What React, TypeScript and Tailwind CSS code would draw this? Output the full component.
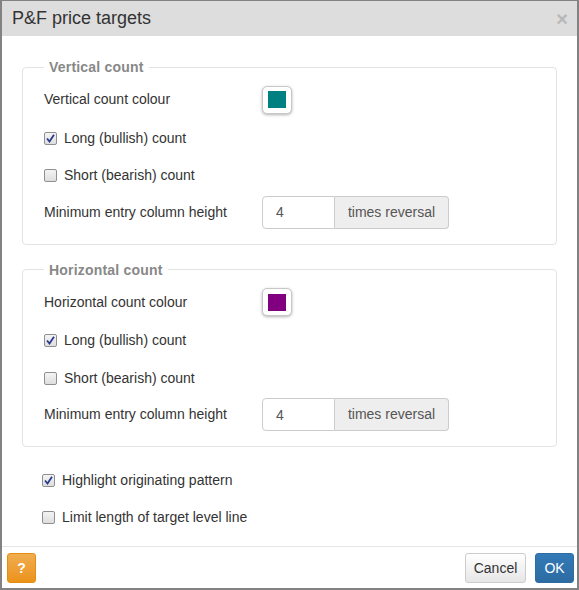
import React, { useState } from 'react';

const font = { fontFamily: '"Liberation Sans", Arial, sans-serif' };

interface CheckProps {
  label: string;
  checked: boolean;
  onToggle: () => void;
  h?: string;
}

const CheckRow: React.FC<CheckProps> = ({ label, checked, onToggle, h = 'h-[37px]' }) => (
  <label className={`flex items-center ${h} cursor-pointer select-none`} onClick={onToggle}>
    <span className="w-[13px] h-[13px] border border-[#8f8f8f] rounded-[2px] bg-gradient-to-b from-[#f4f4f4] to-[#dedede] flex items-center justify-center">
      {checked && (
        <svg width="9" height="9" viewBox="0 0 9 9">
          <path d="M1 4.5 L3.5 7.5 L8 0.8" fill="none" stroke="#2a3a8c" strokeWidth="1.8" />
        </svg>
      )}
    </span>
    <span className="ml-[7px] text-[14px] text-[#333]">{label}</span>
  </label>
);

const ColourRow: React.FC<{ label: string; colour: string }> = ({ label, colour }) => (
  <div className="flex items-center h-[39px]">
    <span className="w-[218px] text-[14px] text-[#333]">{label}</span>
    <button className="w-[30px] h-[28px] rounded-[5px] border border-[#c8c8c8] bg-white shadow-[0_1px_3px_rgba(0,0,0,0.3)] flex items-center justify-center">
      <span className="w-[18px] h-[17px]" style={{ backgroundColor: colour }} />
    </button>
  </div>
);

const HeightRow: React.FC<{ value: string }> = ({ value }) => (
  <div className="flex items-center mt-[1.5px] h-[33px]">
    <span className="w-[218px] text-[14px] text-[#333]">Minimum entry column height</span>
    <div className="flex h-[33px]">
      <input
        defaultValue={value}
        className="w-[73px] h-full border border-[#ccc] rounded-l-[4px] px-[13px] text-[14px] text-[#555] outline-none"
        style={font}
      />
      <span className="w-[114px] h-full border border-l-0 border-[#ccc] rounded-r-[4px] bg-[#eee] text-[#555] text-[14px] flex items-center justify-center">
        times reversal
      </span>
    </div>
  </div>
);

const CountSet: React.FC<{ title: string; label: string; colour: string }> = ({ title, label, colour }) => {
  const [longOn, setLongOn] = useState(true);
  const [shortOn, setShortOn] = useState(false);
  return (
    <fieldset className="border border-[#e3e3e3] rounded-[4px] pl-[21px] pr-[21px] pb-[15px] pt-[3px]">
      <legend className="px-[5px] leading-[20px] text-[14px] font-bold text-[#888] tracking-[0.2px]">{title}</legend>
      <ColourRow label={label} colour={colour} />
      <CheckRow label="Long (bullish) count" checked={longOn} onToggle={() => setLongOn(!longOn)} h="h-[38px]" />
      <CheckRow label="Short (bearish) count" checked={shortOn} onToggle={() => setShortOn(!shortOn)} />
      <HeightRow value="4" />
    </fieldset>
  );
};

export default function App() {
  const [highlight, setHighlight] = useState(true);
  const [limit, setLimit] = useState(false);

  return (
    <div style={font} className="w-[579px] h-[590px] bg-white border-2 border-t border-[#828282] flex flex-col overflow-hidden">
      <div className="h-[35px] bg-[#dddddd] flex items-center justify-between pl-[10px] pr-[9px] shrink-0">
        <span className="text-[18px] text-[#333]">P&amp;F price targets</span>
        <span className="text-[20px] font-bold text-[#b8b8b8] leading-none">×</span>
      </div>

      <div className="flex-1 pt-[21px] px-[20px]">
        <CountSet title="Vertical count" label="Vertical count colour" colour="#008080" />
        <div className="h-[15px]" />
        <CountSet title="Horizontal count" label="Horizontal count colour" colour="#800080" />
        <div className="pl-[20px] mt-[15px]">
          <CheckRow label="Highlight originating pattern" checked={highlight} onToggle={() => setHighlight(!highlight)} />
          <CheckRow label="Limit length of target level line" checked={limit} onToggle={() => setLimit(!limit)} />
        </div>
      </div>

      <div className="border-t border-[#e5e5e5] flex items-center justify-between pl-[5px] pr-[3px] pt-[6px] pb-[5px] shrink-0">
        <button className="w-[29px] h-[30px] rounded-[3px] border border-[#e38d13] bg-gradient-to-b from-[#f0ad4e] to-[#eb9316] text-white text-[14px] font-bold">
          ?
        </button>
        <div className="flex gap-[9px]">
          <button className="w-[61px] h-[30px] rounded-[3px] border border-[#ccc] bg-gradient-to-b from-white to-[#e6e6e6] text-[#333] text-[14px]">
            Cancel
          </button>
          <button className="w-[39px] h-[30px] rounded-[3px] border border-[#2e6da4] bg-gradient-to-b from-[#337ab7] to-[#2d6ca2] text-white text-[14px]">
            OK
          </button>
        </div>
      </div>
    </div>
  );
}
